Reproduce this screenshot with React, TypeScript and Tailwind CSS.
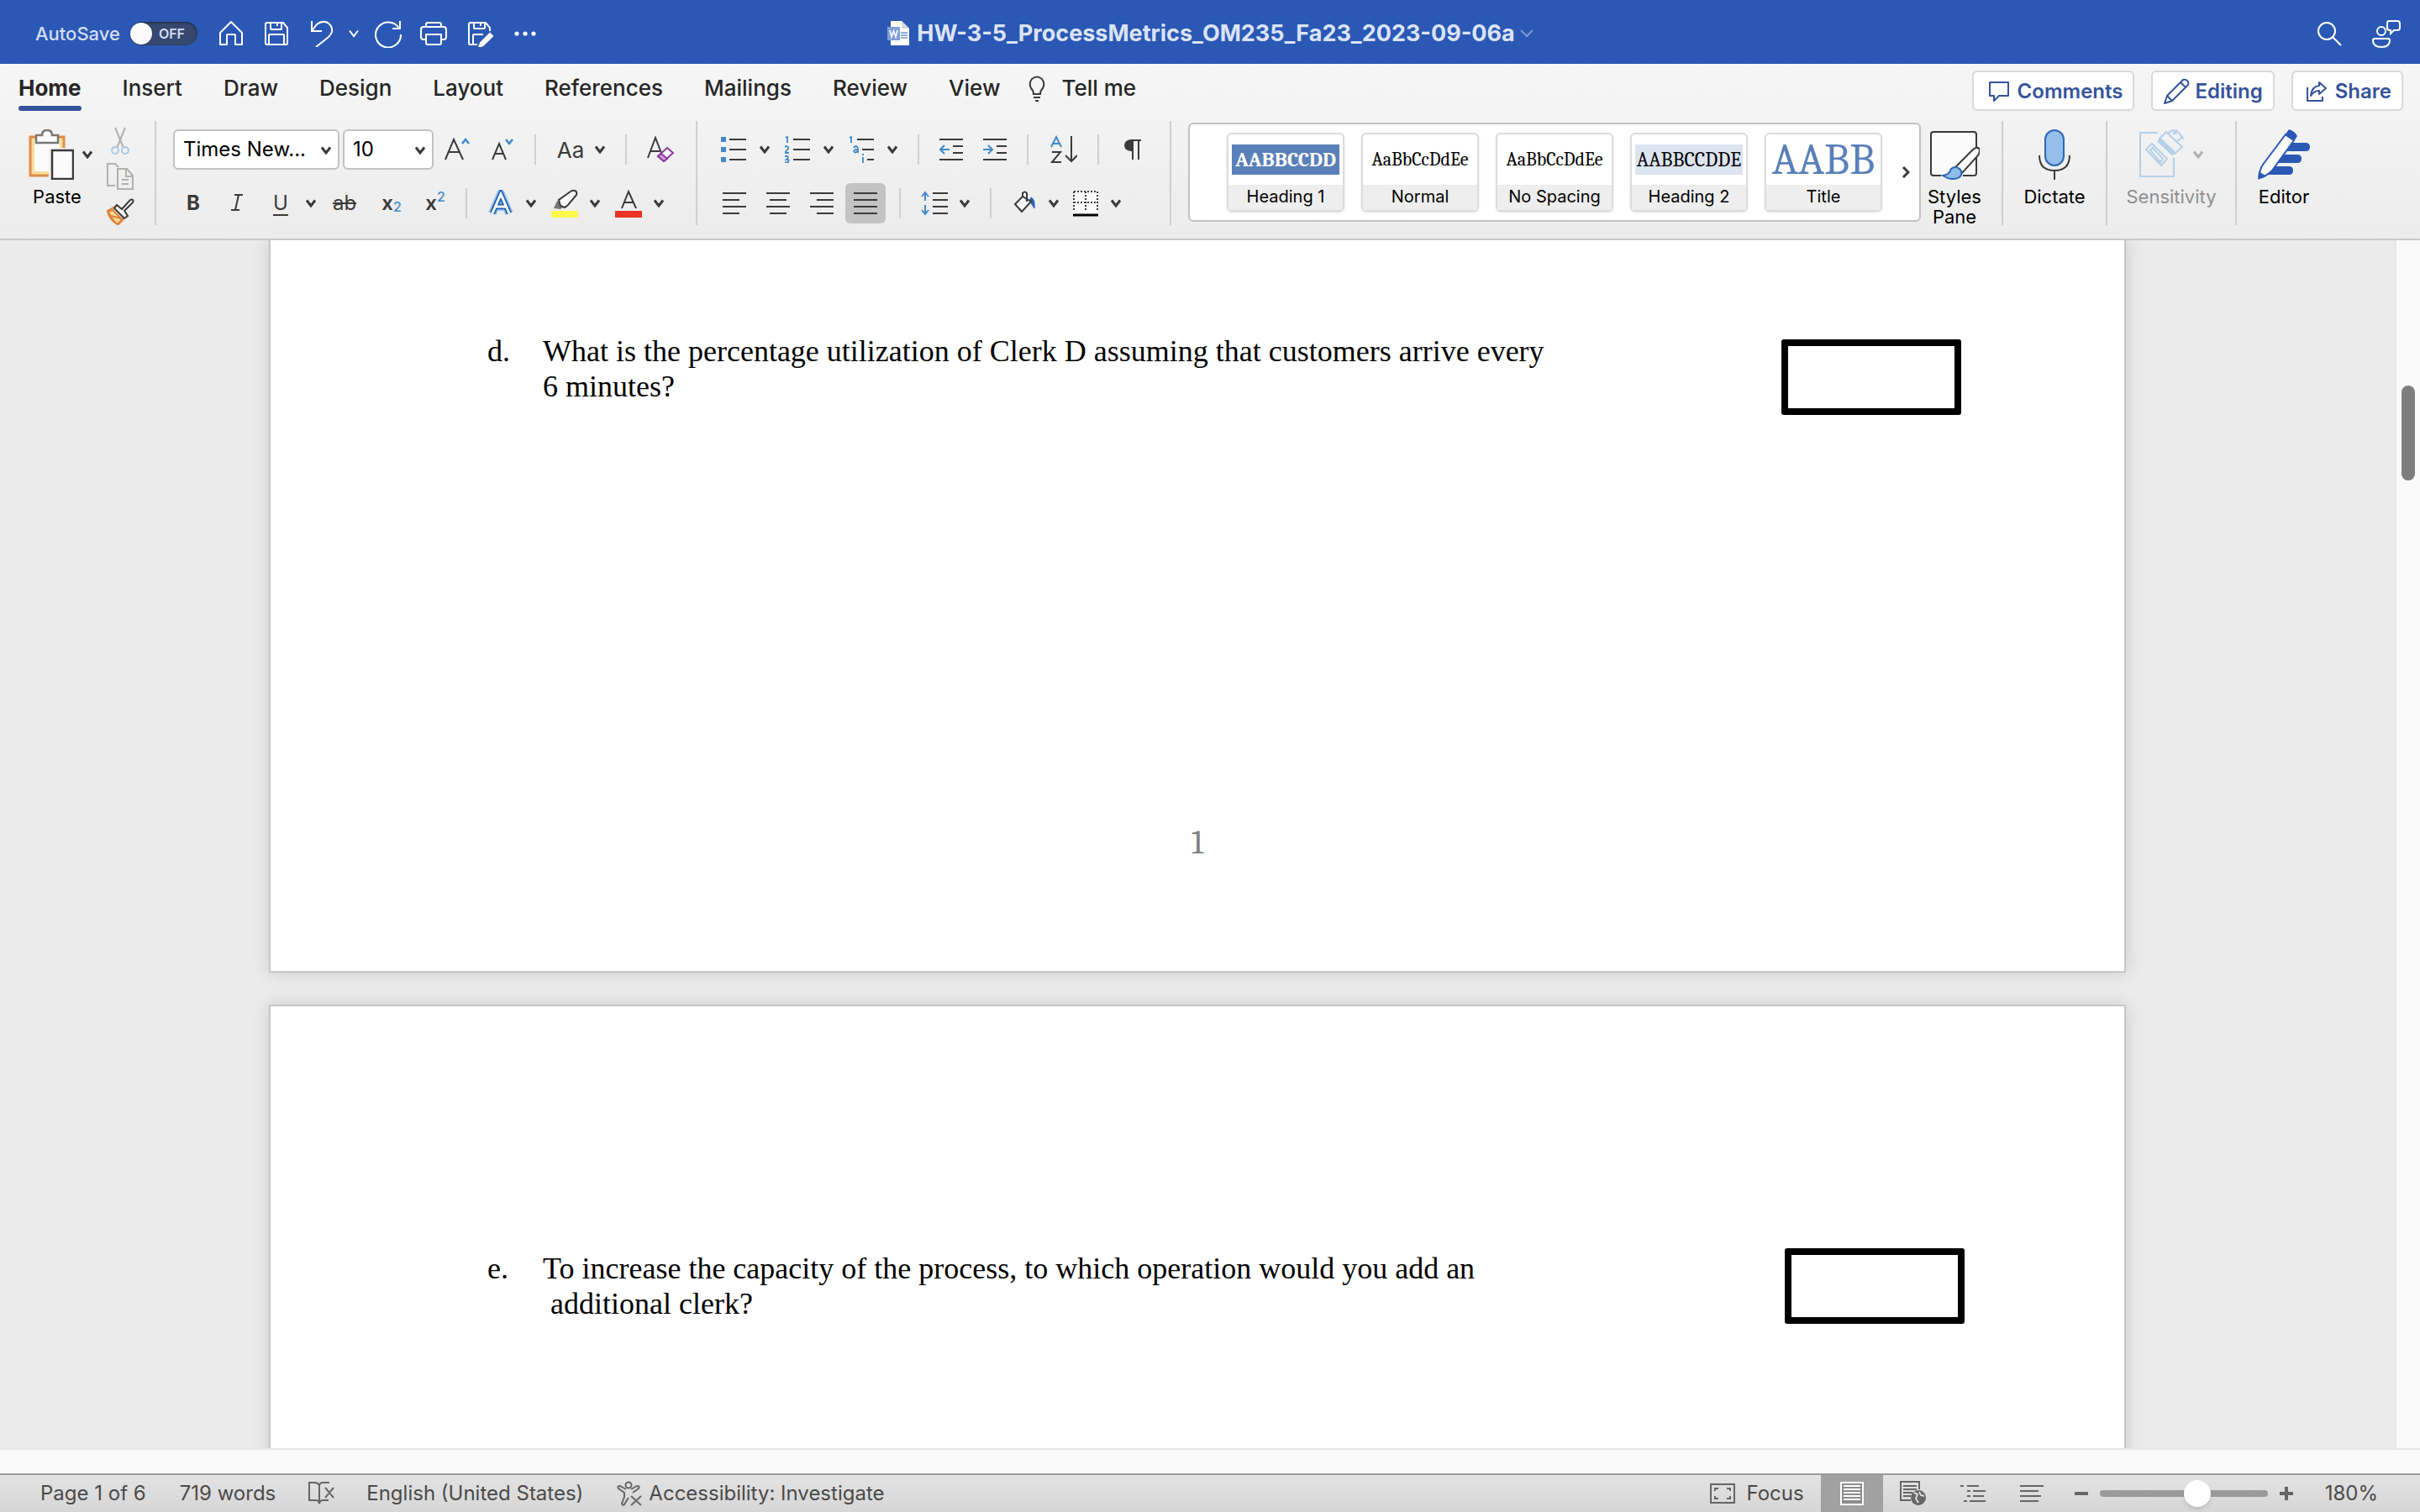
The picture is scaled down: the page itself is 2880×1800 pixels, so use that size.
import type { ReactNode } from "react";

interface IconProps {
  w?: number;
  h?: number;
  stroke?: string;
  sw?: number;
  children: ReactNode;
}

function Icon({ w = 32, h = 32, stroke = "#3b3a39", sw = 2, children }: IconProps) {
  return (
    <svg
      width={w}
      height={h}
      viewBox={`0 0 ${w} ${h}`}
      fill="none"
      stroke={stroke}
      strokeWidth={sw}
      className="block shrink-0"
      aria-hidden="true"
    >
      {children}
    </svg>
  );
}

function ToolButton({
  label,
  className = "",
  children,
}: {
  label: string;
  className?: string;
  children: ReactNode;
}) {
  return (
    <button type="button" aria-label={label} className={`flex shrink-0 items-center justify-center ${className}`}>
      {children}
    </button>
  );
}

function Chevron({ color = "#3b3a39", sw = 3 }: { color?: string; sw?: number }) {
  return (
    <Icon w={12} h={10} stroke={color} sw={sw}>
      <path d="M1 1.5 6 8l5-6.5" />
    </Icon>
  );
}

function More({ label, className = "ml-3.5" }: { label: string; className?: string }) {
  return (
    <ToolButton label={label} className={`h-8 w-3 ${className}`}>
      <Chevron />
    </ToolButton>
  );
}

function GroupDivider({ className = "" }: { className?: string }) {
  return <div className={`h-[124px] w-0.5 shrink-0 bg-[#d0d0d0] ${className}`} />;
}

function RowDivider({ className = "mx-6" }: { className?: string }) {
  return <div className={`h-9 w-0.5 shrink-0 bg-[#d0d0d0] ${className}`} />;
}

/* ---------- title bar ---------- */

function TitleBar() {
  return (
    <header className="grid h-[76px] grid-cols-[1fr_auto_1fr] items-center bg-[#2b58b5] pt-1">
      <div className="flex items-center pl-[42px]">
        <label className="flex items-center text-[22px] font-medium text-[#d3def3]">
          AutoSave
          <input type="checkbox" role="switch" className="peer sr-only" />
          <span className="ml-3 flex h-7 w-20 items-center rounded-full bg-[#36486f] shadow-[inset_0_1px_3px_rgba(0,0,0,0.5)]">
            <span className="size-[26px] rounded-full bg-[#fbfbfb] shadow" />
            <span className="ml-2 text-base font-semibold">OFF</span>
          </span>
        </label>
        <ToolButton label="Home" className="ml-6">
          <Icon stroke="#fff">
            <path d="M3 29V15L16 2l13 13v14h-8V18q0-1-1-1h-8q-1 0-1 1v11z" strokeLinejoin="round" />
          </Icon>
        </ToolButton>
        <ToolButton label="Save" className="ml-[22px]">
          <Icon stroke="#fff">
            <path d="M4 3h20l5 6v18q0 2-2 2H5q-2 0-2-2V5q0-2 2-2zM9 3v7q0 1 1 1h11q1 0 1-1V3M17 3v4M7 29V18q0-1 1-1h16q1 0 1 1v11" />
          </Icon>
        </ToolButton>
        <ToolButton label="Undo" className="ml-[22px]">
          <Icon stroke="#fff">
            <path d="M4 1v12h12M4 13 10 5q6-5 13-2 6 4 5 11-1 3-4 6L9 32" />
          </Icon>
        </ToolButton>
        <ToolButton label="Undo options" className="ml-4">
          <Chevron color="#fff" sw={2} />
        </ToolButton>
        <ToolButton label="Repeat" className="ml-[18px]">
          <Icon w={34} h={34} stroke="#fff">
            <path d="M31 2v9h-9M30 11A15 15 0 1 0 32 18" />
          </Icon>
        </ToolButton>
        <ToolButton label="Print" className="ml-5">
          <Icon w={34} stroke="#fff">
            <path d="M8 8V5q0-2 2-2h14q2 0 2 2v3M8 23H5q-3 0-3-3v-9q0-3 3-3h24q3 0 3 3v9q0 3-3 3h-3M8 17h18v10q0 2-2 2H10q-2 0-2-2z" />
          </Icon>
        </ToolButton>
        <ToolButton label="Save as" className="ml-[22px]">
          <Icon stroke="#fff">
            <path d="M13 29H4q-1 0-1-2V5q0-2 2-2h18l5 6v4M9 3v6q0 1 1 1h11q1 0 1-1V3M17 3v4M8 29V18q0-1 1-1h11" />
            <path d="m28 16-11 11-2 5 5-2 11-11z" fill="#fff" />
          </Icon>
        </ToolButton>
        <ToolButton label="More commands" className="ml-[22px]">
          <Icon w={32} h={8} stroke="none">
            <circle cx="6" cy="4" r="2.6" fill="#fff" />
            <circle cx="16" cy="4" r="2.6" fill="#fff" />
            <circle cx="26" cy="4" r="2.6" fill="#fff" />
          </Icon>
        </ToolButton>
      </div>

      <div className="flex items-center">
        <Icon w={28} stroke="none">
          <path d="M5 1h13l9 9v20H5z" fill="#fff" />
          <path d="M18 1v9h9z" fill="#d5d9e2" />
          <path d="M17 15h8M17 18h8M17 21h8" stroke="#6d94d4" strokeWidth="1.5" />
          <path d="M1 8h15v16H1z" fill="#7f9fd8" />
          <path d="m4 12 2 8 2.500-7 2.500 7 2-8" stroke="#fff" strokeWidth="1.600" />
        </Icon>
        <h1 className="ml-2 text-[27px] font-bold text-[#dbe4f6]">HW-3-5_ProcessMetrics_OM235_Fa23_2023-09-06a</h1>
        <ToolButton label="Document options" className="ml-1.5">
          <Icon w={16} h={10} stroke="#7f9bd6">
            <path d="m1 1 7 7 7-7" />
          </Icon>
        </ToolButton>
      </div>

      <div className="flex items-center justify-end pr-[22px]">
        <ToolButton label="Search">
          <Icon stroke="#fff">
            <circle cx="13" cy="13" r="10" />
            <path d="m20 20 10 10" />
          </Icon>
        </ToolButton>
        <ToolButton label="Presence" className="ml-[34px]">
          <Icon w={36} h={34} stroke="#fff">
            <circle cx="12" cy="14" r="5" />
            <path d="M4 23h16q2 0 2 2 0 8-10 8T2 25q0-2 2-2zM21 2h10q3 0 3 3v5q0 3-3 3h-4l-4 4v-4h-1q-3 0-3-3V5q0-3 2-3z" />
          </Icon>
        </ToolButton>
      </div>
    </header>
  );
}

/* ---------- tabs ---------- */

const tabs = ["Insert", "Draw", "Design", "Layout", "References", "Mailings", "Review", "View"];

function TabRow() {
  return (
    <div className="flex h-[68px] items-start justify-between pr-5 pl-[22px]">
      <nav className="flex items-start gap-[49px] pt-3 text-[26px] leading-[34px] text-[#262626]">
        <button type="button" className="flex flex-col font-bold">
          Home
          <span className="mt-1 h-1.5 w-full rounded-full bg-[#35539b]" />
        </button>
        {tabs.map((tab) => (
          <button key={tab} type="button" className="font-medium">
            {tab}
          </button>
        ))}
        <button type="button" className="-ml-4 flex items-center gap-[18px] font-medium">
          <Icon w={22} h={32}>
            <path d="M7 23q0-4-3-7-3-6 1-11 6-5 12 0 4 5 1 11-3 3-3 7zM7 27h8M9 31h4" />
          </Icon>
          Tell me
        </button>
      </nav>
      <div className="flex gap-5 pt-2 text-2xl font-semibold text-[#35539b]">
        <button type="button" className="flex h-12 items-center gap-2 rounded-md border-2 border-[#d9d9d9] bg-white pt-0.5 pr-3 pl-4">
          <Icon w={28} h={28} stroke="#35539b">
            <path d="M3 3h22v16H14l-6 6v-6H3z" strokeLinejoin="round" />
          </Icon>
          Comments
        </button>
        <button type="button" className="flex h-12 items-center gap-1.5 rounded-md border-2 border-[#d9d9d9] bg-white pt-0.5 pr-3 pl-3">
          <Icon stroke="#35539b">
            <path d="m2 30 3-9L24 2q3-1 5 1t1 5L11 27zM5 21l6 6M21 5l6 6" strokeLinejoin="round" />
          </Icon>
          Editing
        </button>
        <button type="button" className="flex h-12 items-center gap-2 rounded-md border-2 border-[#d9d9d9] bg-white pt-0.5 pr-3 pl-3.5">
          <Icon w={28} h={28} stroke="#35539b">
            <path d="M3 9v16h18v-5M17 3l8 7-8 7v-4q-6 0-10 6 1-11 10-12z" strokeLinejoin="round" />
          </Icon>
          Share
        </button>
      </div>
    </div>
  );
}

/* ---------- ribbon ---------- */

function ClipboardGroup() {
  return (
    <div className="flex pt-2.5 pl-[26px]">
      <button type="button" className="flex flex-col items-start gap-2">
        <span className="flex items-center gap-2.5 pl-2">
          <Icon w={54} h={60} sw={2}>
            <path d="M2 9h40v46H2z" fill="#f5dd98" stroke="#e08b45" strokeWidth="3" />
            <path d="M7 14h30v36H7z" fill="#fbfbfb" stroke="none" />
            <path d="M9 7h7q0-6 6-6t6 6h7v9H9z" fill="#fbfbfb" stroke="#797775" strokeWidth="2.500" />
            <path d="M24 22h30v38H24z" fill="#f2f2f2" stroke="none" />
            <path d="M28 25h25v34H28z" fill="#fbfbfb" strokeWidth="2.500" />
          </Icon>
          <Chevron />
        </span>
        <span className="w-[84px] text-center text-[22px] leading-6 text-black">Paste</span>
      </button>
      <div className="ml-4 flex flex-col items-center">
        <ToolButton label="Cut" className="-mt-1 h-9">
          <Icon w={24} h={34} stroke="#b3b0ad">
            <path d="M6 1 16 25M18 1 8 25" />
            <circle cx="6" cy="28" r="4" stroke="#a9c8e8" />
            <circle cx="18" cy="28" r="4" stroke="#a9c8e8" />
          </Icon>
        </ToolButton>
        <ToolButton label="Copy" className="mt-1.5 h-9">
          <Icon stroke="#b3b0ad">
            <path d="M10 27H1V1h9l4 4M13 7h11l7 8v16H13zM23 7v9h8M18 20h8M18 25h8" />
          </Icon>
        </ToolButton>
        <ToolButton label="Format painter" className="mt-1.5 h-9">
          <Icon w={34}>
            <path d="m3 16 5-2 12 12-5 5q-2-1-3-1Q6 23 3 16z" fill="#f5dd98" stroke="#e0813a" />
            <path d="m2 15 9-5 11 12-8 9Q4 26 2 15zM6 21l12 3" stroke="#e0813a" />
            <path d="m13 8 6 5L29 2q2-1 3 0t0 3L22 15l4 6-4 3-12-12z" fill="#fbfbfb" />
          </Icon>
        </ToolButton>
      </div>
    </div>
  );
}

function FontGroup() {
  return (
    <div className="ml-5 flex flex-col gap-4 pt-2.5">
      <div className="flex h-12 items-center">
        <div className="relative">
          <select
            aria-label="Font"
            className="h-12 w-[198px] appearance-none rounded-md border-2 border-[#c2c2c2] bg-white pl-2.5 text-2xl text-black"
          >
            <option>Times New...</option>
          </select>
          <span className="pointer-events-none absolute top-5 right-2.5">
            <Chevron />
          </span>
        </div>
        <div className="relative ml-1">
          <select
            aria-label="Font size"
            className="h-12 w-[108px] appearance-none rounded-md border-2 border-[#c2c2c2] bg-white pl-2.5 text-2xl text-black"
          >
            <option>10</option>
          </select>
          <span className="pointer-events-none absolute top-5 right-2.5">
            <Chevron />
          </span>
        </div>
        <ToolButton label="Increase font size" className="ml-3">
          <Icon>
            <path d="M2 28 12 4l11 24M6 19h13" />
            <path d="m22 9 4-5 4 5" stroke="#3f8acb" strokeWidth="2.500" />
          </Icon>
        </ToolButton>
        <ToolButton label="Decrease font size" className="ml-6">
          <Icon w={28}>
            <path d="m2 28 8-19 8 19M5 21h10" />
            <path d="m18 4 4 5 4-5" stroke="#3f8acb" strokeWidth="2.500" />
          </Icon>
        </ToolButton>
        <RowDivider />
        <ToolButton label="Change case" className="w-[34px] text-[26px] text-[#3b3a39]">
          Aa
        </ToolButton>
        <More label="Case options" className="ml-3" />
        <RowDivider />
        <ToolButton label="Clear formatting">
          <Icon>
            <path d="m1 26 9-24 7 18M4 18h11" />
            <path d="m13 24 11-10 7 6-11 10z" fill="#fbfbfb" stroke="#8c3a9e" />
            <path d="m13 24 4-3 7 6-4 3z" fill="#cfa4d8" stroke="#8c3a9e" />
          </Icon>
        </ToolButton>
      </div>

      <div className="flex h-12 items-center text-2xl leading-8 text-[#3b3a39]">
        <ToolButton label="Bold" className="ml-2 h-8 w-8 font-bold">
          B
        </ToolButton>
        <ToolButton label="Italic" className="ml-5 h-8 w-8">
          <Icon>
            <path d="M13 6h10M9 24h10M18 6l-4 18" />
          </Icon>
        </ToolButton>
        <ToolButton label="Underline" className="ml-5 h-8 w-8 underline underline-offset-[5px]">
          U
        </ToolButton>
        <More label="Underline options" />
        <ToolButton label="Strikethrough" className="ml-[18px] h-8 w-8 line-through">
          ab
        </ToolButton>
        <ToolButton label="Subscript" className="ml-6 h-8 w-8 items-baseline font-semibold">
          x<sub className="text-base font-medium text-[#3f8acb]">2</sub>
        </ToolButton>
        <ToolButton label="Superscript" className="ml-5 h-8 w-8 items-baseline font-semibold">
          x<sup className="text-base font-medium text-[#3f8acb]">2</sup>
        </ToolButton>
        <RowDivider className="mr-6 ml-5" />
        <ToolButton label="Text effects">
          <Icon>
            <path d="m6 28 10-23 10 23M10 20h12" stroke="#9cc4ec" strokeWidth="10" />
            <path d="m6 28 10-23 10 23M10 20h12" stroke="#1f5fae" strokeWidth="6.500" />
            <path d="m6 28 10-23 10 23M10 20h12" stroke="#fff" strokeWidth="3" />
          </Icon>
        </ToolButton>
        <More label="Text effects options" />
        <ToolButton label="Highlight" className="ml-[18px]">
          <Icon h={34}>
            <path d="M0 26h32v8H0z" fill="#fdf84b" stroke="none" />
            <path d="m3 23 4-9 9 6-5 4z" fill="#797775" stroke="none" />
            <path d="m9 13 2 7 5 2 4-3L30 7q1-4-2-5t-5 1z" fill="#fbfbfb" />
          </Icon>
        </ToolButton>
        <More label="Highlight options" />
        <ToolButton label="Font color" className="ml-[18px]">
          <Icon h={34}>
            <path d="M0 26h32v8H0z" fill="#ea3323" stroke="none" />
            <path d="m8 23 8-20 9 20M11 16h11" />
          </Icon>
        </ToolButton>
        <More label="Font color options" />
      </div>
    </div>
  );
}

const blue = "#3f8acb";

function ParagraphGroup() {
  return (
    <div className="ml-7 flex flex-col gap-4 pt-2.5">
      <div className="flex h-12 items-center">
        <ToolButton label="Bullets">
          <Icon>
            <path d="M0 4h6M0 16h6M0 28h6" stroke={blue} strokeWidth="6" />
            <path d="M10 4h20M10 16h20M10 28h20" />
          </Icon>
        </ToolButton>
        <More label="Bullet options" />
        <ToolButton label="Numbering" className="ml-[18px]">
          <Icon>
            <path d="M10 4h20M10 16h20M10 28h20" />
            <path d="m1 2 2-1v7M0 13q1-1 2-1 3 1 2 3l-4 5h5M0 24h3q2 2-1 4 4 0 2 3-1 1-4 0" stroke={blue} strokeWidth="1.800" />
          </Icon>
        </ToolButton>
        <More label="Numbering options" />
        <ToolButton label="Multilevel list" className="ml-[18px]">
          <Icon>
            <path d="M10 4h20M16 16h14M22 28h8" />
            <path d="m1 2 2-1v7M6 14q1-2 3-2 2 1 2 3v5M11 16q-5 0-5 2 1 3 5 0M17 25v7M17 21v2" stroke={blue} strokeWidth="1.800" />
          </Icon>
        </ToolButton>
        <More label="Multilevel options" />
        <RowDivider />
        <ToolButton label="Decrease indent">
          <Icon w={28}>
            <path d="M0 4h28M16 12h12M16 20h12M0 28h28" />
            <path d="M12 16H1M6 11l-5 5 5 5" stroke={blue} />
          </Icon>
        </ToolButton>
        <ToolButton label="Increase indent" className="ml-6">
          <Icon w={28}>
            <path d="M0 4h28M16 12h12M16 20h12M0 28h28" />
            <path d="M0 16h11M6 11l5 5-5 5" stroke={blue} />
          </Icon>
        </ToolButton>
        <RowDivider />
        <ToolButton label="Sort">
          <Icon w={34} h={34}>
            <path d="M3 14 9 2l6 12M5 10h8" stroke={blue} />
            <path d="M4 20h10L4 32h11M27 1v30M20 24l7 7 7-7" />
          </Icon>
        </ToolButton>
        <RowDivider />
        <ToolButton label="Show formatting">
          <Icon>
            <path d="M16 4v24M23 4v24M26 5H13" />
            <path d="M16 4v14h-2q-8-1-8-7t8-7z" fill="#3b3a39" stroke="none" />
          </Icon>
        </ToolButton>
      </div>

      <div className="flex h-12 items-center">
        <ToolButton label="Align left">
          <Icon>
            <path d="M2 4h28M2 12h20M2 20h28M2 28h20" />
          </Icon>
        </ToolButton>
        <ToolButton label="Center" className="ml-5">
          <Icon>
            <path d="M2 4h28M6 12h20M2 20h28M6 28h20" />
          </Icon>
        </ToolButton>
        <ToolButton label="Align right" className="ml-5">
          <Icon>
            <path d="M2 4h28M10 12h20M2 20h28M10 28h20" />
          </Icon>
        </ToolButton>
        <ToolButton label="Justify" className="ml-3 size-12 rounded-md bg-[#c3c3c3]">
          <Icon>
            <path d="M2 4h28M2 12h28M2 20h28M2 28h28" />
          </Icon>
        </ToolButton>
        <RowDivider className="mr-6 ml-4" />
        <ToolButton label="Line spacing">
          <Icon>
            <path d="M14 4h18M14 12h18M14 20h18M14 28h18" />
            <path d="M5 4v9M1 8l4-5 4 5M5 18v10M1 24l4 5 4-5" stroke={blue} />
          </Icon>
        </ToolButton>
        <More label="Line spacing options" />
        <RowDivider />
        <ToolButton label="Shading">
          <Icon>
            <path d="M23 9q5 2 4 13-3-5-6-9z" fill="#2b62b8" stroke="#2b62b8" strokeWidth="1" />
            <path d="M13 9v-5q3-3 5 0v10M13 8 4 17l8 9 11-12z" fill="#fbfbfb" />
          </Icon>
        </ToolButton>
        <More label="Shading options" className="ml-3" />
        <ToolButton label="Borders" className="ml-4">
          <Icon>
            <path d="M1 1h30v28H1z" fill="#fbfbfb" stroke="none" />
            <path d="M2 2h28M2 15h28M2 2v24M16 2v24M30 2v24" strokeDasharray="2 2" />
            <path d="M1 30h30" stroke="#000" strokeWidth="3" />
          </Icon>
        </ToolButton>
        <More label="Border options" />
      </div>
    </div>
  );
}

const styleCards = [
  { name: "Heading 1", sample: "AABBCCDD", look: "h-9 bg-[#5a80b9] text-white text-2xl font-bold" },
  { name: "Normal", sample: "AaBbCcDdEe", look: "h-9 text-black text-[22px]" },
  { name: "No Spacing", sample: "AaBbCcDdEe", look: "h-9 text-black text-[22px]" },
  { name: "Heading 2", sample: "AABBCCDDE", look: "h-9 bg-[#dce4f0] text-black text-2xl" },
  { name: "Title", sample: "AABB", look: "text-[#5a80b9] text-[52px] leading-[60px]" },
];

function StyleGallery() {
  return (
    <div className="mt-0.5 ml-5 flex h-[118px] w-[872px] items-center rounded-md border-2 border-[#c2c2c2] bg-white pl-11">
      <div className="flex gap-5">
        {styleCards.map((card) => (
          <button
            key={card.name}
            type="button"
            className="flex h-[94px] w-[140px] flex-col rounded-md border-2 border-[#dcdcdc] bg-white shadow-sm"
          >
            <span className="flex h-[60px] w-full items-center px-1 font-['Cambria','Liberation_Serif',serif]">
              <span className={`flex w-full items-center justify-center ${card.look}`}>{card.sample}</span>
            </span>
            <span className="h-[30px] w-full bg-[#eeeeee] text-center text-xl leading-7 text-black">{card.name}</span>
          </button>
        ))}
      </div>
      <ToolButton label="More styles" className="flex-1 pl-3">
        <Icon w={10} h={14} sw={3}>
          <path d="m2 1 6 6-6 6" />
        </Icon>
      </ToolButton>
    </div>
  );
}

function BigButton({ label, className, children }: { label: string; className: string; children: ReactNode }) {
  return (
    <button type="button" className={`flex flex-col items-center gap-2 pt-2.5 text-[22px] leading-6 ${className}`}>
      <span className="flex h-[60px] items-center gap-2.5">{children}</span>
      {label}
    </button>
  );
}

function Ribbon() {
  return (
    <div className="flex h-[140px] items-start">
      <ClipboardGroup />
      <GroupDivider className="ml-6" />
      <FontGroup />
      <GroupDivider className="ml-[26px]" />
      <ParagraphGroup />
      <GroupDivider className="ml-7" />
      <StyleGallery />
      <BigButton label="Styles Pane" className="mr-4 w-20 text-black">
        <Icon w={60} h={60}>
          <path d="M14 55H5q-3 0-3-3V6q0-3 3-3h48q3 0 3 3v46q0 3-3 3H40" fill="#fbfbfb" />
          <path d="M58 22q4 2 0 9L39 52l-9-6L50 26q5-5 8-4z" fill="#fbfbfb" />
          <path d="M16 55q8-1 10-8 5-4 10 0 5 5 0 10-9 5-20-2z" fill="#8fbce8" stroke="#2b67b5" />
        </Icon>
      </BigButton>
      <GroupDivider />
      <BigButton label="Dictate" className="w-[122px] text-black">
        <Icon w={38} h={60}>
          <path d="M1 31q0 18 18 18t18-18M19 49v11" />
          <rect x="8" y="1" width="22" height="42" rx="11" fill="#93bfea" stroke="#2b67b5" />
        </Icon>
      </BigButton>
      <GroupDivider />
      <BigButton label="Sensitivity" className="w-[152px] text-[#8e8e8e]">
        <Icon w={54} h={60} stroke="#b4d0e9">
          <path d="M22 4H1v52h40V34" />
          <path d="m8 24 7-7 18 18-7 8zM13 25l3-3 12 13-3 4zM24 11l8-8 19 18-9 8zM34 5l6-5 4 6M44 15l7-6-7-8-4 5M51 9l1 3" />
          <path d="m23 12 18 17" strokeWidth="6" />
        </Icon>
        <Chevron color="#b0b0b0" />
      </BigButton>
      <GroupDivider />
      <BigButton label="Editor" className="ml-6 w-16 text-black">
        <Icon w={62} h={60} stroke="none">
          <path d="M36 16h21q5 0 5 5t-5 5H29zM28 30h19q5 0 5 5t-5 5H20zM17 44h20q5 0 5 5t-5 5H10z" fill="#2b58b5" />
          <path d="m33 6 10 7-26 36Q10 56 2 58q-1-8 4-16z" fill="#fbfbfb" stroke="#2b58b5" strokeWidth="2" />
          <path d="m37 0q7 2 10 8l-4 6-11-7zM1 50l-1 10 9-5z" fill="#2b58b5" />
        </Icon>
      </BigButton>
    </div>
  );
}

/* ---------- document ---------- */

function Question({ marker, children }: { marker: string; children: ReactNode }) {
  return (
    <div className="flex text-4xl leading-[42px]">
      <span className="w-[66px]">{marker}</span>
      <p className="max-w-[1210px]">{children}</p>
    </div>
  );
}

function AnswerBox({ label, className = "" }: { label: string; className?: string }) {
  return (
    <input
      type="text"
      aria-label={label}
      className={`h-[90px] w-[214px] rounded-[3px] border-8 border-black bg-white ${className}`}
    />
  );
}

function Document() {
  const page =
    "w-[78%] max-w-[2210px] shrink-0 border-2 border-[#c6c6c6] bg-white pl-[258px] text-black shadow-[0_0_20px_rgba(0,0,0,0.14)]";

  return (
    <main className="flex min-h-0 flex-1">
      <div className="flex min-w-0 flex-1 flex-col items-center gap-[38px] overflow-hidden bg-[#ebebeb] font-['Times_New_Roman','Liberation_Serif',serif]">
        <section className={`${page} border-t-0 pt-[111px] pr-[194px] pb-[132px]`}>
          <div className="flex items-start justify-between">
            <Question marker="d.">
              What is the percentage utilization of Clerk D assuming that customers arrive every 6 minutes?
            </Question>
            <AnswerBox label="Answer d" className="mt-[7px]" />
          </div>
          <footer className="mt-[488px] mr-16 text-center font-['Cambria','Liberation_Serif',serif] text-[40px] leading-[42px] text-[#808080]">
            1
          </footer>
        </section>
        <section className={`${page} h-[1600px] pt-[288px] pr-[190px]`}>
          <div className="flex items-start justify-between">
            <div className="pt-[3px]">
              <Question marker="e.">
                To increase the capacity of the process, to which operation would you add an
                <br />
                &nbsp;additional clerk?
              </Question>
            </div>
            <AnswerBox label="Answer e" />
          </div>
        </section>
      </div>
      <div className="w-[30px] border-l-2 border-[#e6e6e6] bg-[#fafafa] pt-[173px]">
        <div className="mx-auto h-[113px] w-4 rounded-full bg-[#7d7d7d]" />
      </div>
    </main>
  );
}

/* ---------- status bar ---------- */

function StatusBar() {
  const gray = "#666666";

  return (
    <footer className="flex h-[46px] items-center justify-between border-t-2 border-[#9b9b9b] bg-linear-to-b from-[#e3e3e3] to-[#d6d6d6] text-2xl text-[#4a4a4a]">
      <div className="flex items-center pl-12">
        <button type="button">Page 1 of 6</button>
        <button type="button" className="ml-10">
          719 words
        </button>
        <ToolButton label="Proofing" className="ml-[38px]">
          <Icon w={34} h={28} stroke={gray}>
            <path d="M14 4q-2-3-5-3H2v21h8q3 0 4 4 1-4 4-4h7M14 4v20M14 4q1-3 4-3h8M21 7l10 12M31 7 21 19" />
          </Icon>
        </ToolButton>
        <button type="button" className="ml-9">
          English (United States)
        </button>
        <button type="button" className="ml-10 flex items-center gap-1.5">
          <Icon h={30} stroke={gray}>
            <circle cx="14" cy="5" r="3.500" />
            <path d="M11 10 4 6Q0 6 2 9l7 5v5L6 27q1 3 3 1l5-8M17 10l7-4q4 0 2 3l-7 5M17 18l12 11M29 18 17 29" />
          </Icon>
          Accessibility: Investigate
        </button>
      </div>

      <div className="flex items-center self-stretch pr-[50px]">
        <button type="button" className="flex items-center gap-3">
          <Icon h={26} stroke={gray}>
            <path d="M2 2h28v22H2zM7 10V7h4M21 7h4v3M25 16v3h-4M11 19H7v-3" />
          </Icon>
          Focus
        </button>
        <ToolButton label="Print layout" className="ml-5 w-[74px] self-stretch bg-[#a1a1a1]">
          <Icon w={28} h={28} stroke="#fff">
            <path d="M1 1h26v26H1z" fill="#8c8c8c" />
            <path d="M4 5h20M4 9h20M4 13h20M4 17h20M4 21h20" />
          </Icon>
        </ToolButton>
        <ToolButton label="Web layout" className="ml-5">
          <Icon h={30} stroke={gray}>
            <path d="M13 23H1V1h22v9M4 6h16M4 10h16M4 14h11M4 18h9" />
            <circle cx="22" cy="20" r="9" fill={gray} stroke="none" />
            <path d="m17 14 4 2-2 5 3 5M23 13l2 4 4 1" stroke="#dcdcdc" />
          </Icon>
        </ToolButton>
        <ToolButton label="Outline" className="ml-10">
          <Icon w={30} h={24} stroke={gray}>
            <path d="M0 3h4M8 3h14M8 9h4M15 9h15M8 15h4M15 15h13M4 21h4M11 21h19" />
          </Icon>
        </ToolButton>
        <ToolButton label="Draft" className="ml-10">
          <Icon w={30} h={24} stroke={gray}>
            <path d="M1 3h28M1 9h22M1 15h25M1 21h22" />
          </Icon>
        </ToolButton>
        <ToolButton label="Zoom out" className="ml-9">
          <Icon w={16} h={16} stroke={gray} sw={4}>
            <path d="M0 8h16" />
          </Icon>
        </ToolButton>
        <input
          type="range"
          aria-label="Zoom"
          min={0}
          max={100}
          defaultValue={60}
          className="mx-3.5 h-2 w-[200px] appearance-none rounded-full bg-[#9a9a9a] [&::-webkit-slider-thumb]:size-8 [&::-webkit-slider-thumb]:appearance-none [&::-webkit-slider-thumb]:rounded-full [&::-webkit-slider-thumb]:bg-white [&::-webkit-slider-thumb]:shadow-md"
        />
        <ToolButton label="Zoom in">
          <Icon w={16} h={16} stroke={gray} sw={4}>
            <path d="M0 8h16M8 0v16" />
          </Icon>
        </ToolButton>
        <button type="button" className="ml-[38px]">
          180%
        </button>
      </div>
    </footer>
  );
}

export default function App() {
  return (
    <div className="flex h-screen flex-col overflow-hidden font-['Inter','Liberation_Sans',sans-serif]">
      <TitleBar />
      <div className="border-b-2 border-[#c8c8c8] bg-linear-to-b from-[#f6f6f6] to-[#ececec]">
        <TabRow />
        <Ribbon />
      </div>
      <Document />
      <div className="h-[30px] border-t-2 border-[#e6e6e6] bg-[#fafafa]" />
      <StatusBar />
    </div>
  );
}
